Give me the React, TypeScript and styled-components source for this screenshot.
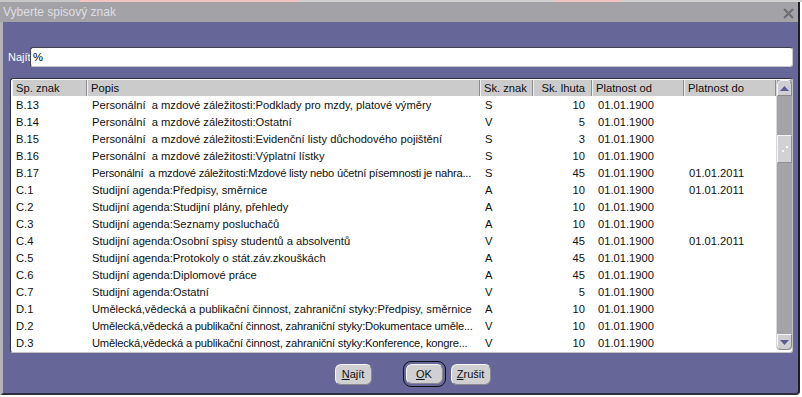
import React from 'react';
import styled, { createGlobalStyle } from 'styled-components';

const Global = createGlobalStyle`
  html, body { margin: 0; padding: 0; background: #ffffff; }
  body { font-family: "Liberation Sans", Arial, sans-serif; font-size: 11.2px; color: #000; }
  * { box-sizing: border-box; }
`;

const Screen = styled.div`
  width: 802px;
  height: 397px;
  overflow: hidden;
  background: #ffffff;
  display: flex;
  flex-direction: column;
`;

const TopStrip = styled.div`
  height: 2px;
  flex: none;
  background: linear-gradient(
    to right,
    #c8c8c8 0 80px,
    #f2c4c4 80px 300px,
    #d0d0d0 300px 555px,
    #f2c4c4 555px 622px,
    #d0d0d0 622px 100%
  );
`;

const Dialog = styled.div`
  width: 800px;
  height: 393px;
  flex: none;
  display: flex;
  flex-direction: column;
  background: #666699;
  border-left: 3px solid #b4b4b8;
  border-right: 2px solid #1e1e28;
  border-bottom: 2px solid #2e2e3a;
  border-bottom-right-radius: 4px;
`;

const TitleBar = styled.div`
  height: 20px;
  flex: none;
  margin-left: -3px;
  padding-left: 3px;
  padding-right: 4px;
  display: flex;
  align-items: center;
  justify-content: space-between;
  background: #a3a3a7;
  color: #dedee2;
  font-size: 12px;
`;

const Close = styled.svg`
  width: 11px;
  height: 11px;
  margin-top: 3px;
`;

const Body = styled.div`
  flex: 1;
  display: flex;
  flex-direction: column;
  padding: 25px 5px 0 5px;
`;

const SearchRow = styled.div`
  display: flex;
  align-items: center;
  height: 20px;
`;

const Label = styled.span`
  width: 22px;
  color: #ffffff;
  font-size: 11px;
`;

const Input = styled.div`
  flex: 1;
  height: 20px;
  background: #ffffff;
  border: 1px solid;
  border-color: #40404c #c8c8d0 #c8c8d0 #40404c;
  border-radius: 3px;
  padding: 0 2px;
  display: flex;
  align-items: center;
  font-size: 11.2px;
`;

const Frame = styled.div`
  margin: 11px 0 0 2px;
  height: 275px;
  display: flex;
  background: #ffffff;
  border: 1px solid;
  border-color: #30303c #c4c4c8 #c4c4c8 #30303c;
  border-radius: 3px;
  padding: 1px 0 0 1px;
  overflow: hidden;
`;

const Grid = styled.div`
  width: 764px;
  flex: none;
  display: grid;
  grid-template-columns: 75px 393px 53px 59px 92px 92px;
  grid-auto-rows: 17px;
  grid-template-rows: 16px;
  align-content: start;
  overflow: hidden;
`;

const Head = styled.div<{ $right?: boolean }>`
  background: #cbcbcb;
  border-right: 1px solid #8c8c90;
  border-left: 1px solid #f0f0f0;
  display: flex;
  align-items: center;
  justify-content: ${p => (p.$right ? 'flex-end' : 'flex-start')};
  padding: 0 ${p => (p.$right ? '6px' : '3px')};
  white-space: nowrap;
  color: #101010;
`;

const Cell = styled.div<{ $right?: boolean; $pad?: number; $tight?: boolean }>`
  display: flex;
  align-items: center;
  justify-content: ${p => (p.$right ? 'flex-end' : 'flex-start')};
  padding: 0 ${p => (p.$right ? '7px' : '0')} 0 ${p => (p.$right ? '0' : `${p.$pad ?? 4}px`)};
  white-space: pre;
  overflow: hidden;
  letter-spacing: ${p => (p.$tight ? '-0.22px' : 'normal')};
  color: #101010;
`;

const ScrollBar = styled.div`
  width: 16px;
  flex: none;
  display: flex;
  flex-direction: column;
  background: #a4a4a8;
  border-left: 1px solid #d8d8dc;
  margin-bottom: 2px;
  border-radius: 0 0 4px 4px;
  overflow: hidden;
`;

const ArrowBtn = styled.div<{ $down?: boolean }>`
  height: 16px;
  flex: none;
  background: #cfcfd2;
  border: 1px solid;
  border-color: #f4f4f4 #88888c #88888c #f4f4f4;
  border-radius: ${p => (p.$down ? '0 0 5px 5px' : '5px 5px 0 0')};
  display: flex;
  align-items: center;
  justify-content: center;
`;

const Track = styled.div`
  flex: 1;
  display: flex;
  flex-direction: column;
  padding-top: 39px;
`;

const Thumb = styled.div`
  height: 28px;
  background: #d2d2d4;
  border: 1px solid;
  border-color: #f4f4f4 #909094 #909094 #f4f4f4;
  display: flex;
  align-items: center;
  justify-content: center;
`;

const Footer = styled.div`
  display: flex;
  justify-content: center;
  align-items: center;
  margin-top: 8px;
  padding-left: 24px;
`;

const Button = styled.div<{ $def?: boolean; $gap?: number }>`
  height: ${p => (p.$def ? '26px' : '21px')};
  padding: ${p => (p.$def ? '2px' : '0')};
  margin-left: ${p => p.$gap ?? 0}px;
  border: ${p => (p.$def ? '1px solid #101018' : 'none')};
  border-radius: 8px;
  display: flex;
  align-items: stretch;
`;

const Face = styled.div<{ $w: number }>`
  width: ${p => p.$w}px;
  background: #d0d0d2;
  border: 1px solid;
  border-color: #f8f8f8 #8a8a90 #8a8a90 #f8f8f8;
  border-radius: 6px;
  display: flex;
  align-items: center;
  justify-content: center;
  font-size: 11px;
  color: #101010;
  u { text-decoration: underline; }
`;

type Row = [string, string, string, string, string, string];

const rows: Row[] = [
  ['B.13', 'Personální  a mzdové záležitosti:Podklady pro mzdy, platové výměry', 'S', '10', '01.01.1900', ''],
  ['B.14', 'Personální  a mzdové záležitosti:Ostatní', 'V', '5', '01.01.1900', ''],
  ['B.15', 'Personální  a mzdové záležitosti:Evidenční listy důchodového pojištění', 'S', '3', '01.01.1900', ''],
  ['B.16', 'Personální  a mzdové záležitosti:Výplatní lístky', 'S', '10', '01.01.1900', ''],
  ['B.17', 'Personální  a mzdové záležitosti:Mzdové listy nebo účetní písemnosti je nahra...', 'S', '45', '01.01.1900', '01.01.2011'],
  ['C.1', 'Studijní agenda:Předpisy, směrnice', 'A', '10', '01.01.1900', '01.01.2011'],
  ['C.2', 'Studijní agenda:Studijní plány, přehledy', 'A', '10', '01.01.1900', ''],
  ['C.3', 'Studijní agenda:Seznamy posluchačů', 'A', '10', '01.01.1900', ''],
  ['C.4', 'Studijní agenda:Osobní spisy studentů a absolventů', 'V', '45', '01.01.1900', '01.01.2011'],
  ['C.5', 'Studijní agenda:Protokoly o stát.záv.zkouškách', 'A', '45', '01.01.1900', ''],
  ['C.6', 'Studijní agenda:Diplomové práce', 'A', '45', '01.01.1900', ''],
  ['C.7', 'Studijní agenda:Ostatní', 'V', '5', '01.01.1900', ''],
  ['D.1', 'Umělecká,vědecká a publikační činnost, zahraniční styky:Předpisy, směrnice', 'A', '10', '01.01.1900', ''],
  ['D.2', 'Umělecká,vědecká a publikační činnost, zahraniční styky:Dokumentace uměle...', 'V', '10', '01.01.1900', ''],
  ['D.3', 'Umělecká,vědecká a publikační činnost, zahraniční styky:Konference, kongre...', 'V', '10', '01.01.1900', ''],
];

const Tri = ({ down }: { down?: boolean }) => (
  <svg width="9" height="5" viewBox="0 0 9 5">
    {down ? <polygon points="0,0 9,0 4.5,5" fill="#5c5c94" /> : <polygon points="0,5 9,5 4.5,0" fill="#5c5c94" />}
  </svg>
);

export default function App() {
  return (
    <>
      <Global />
      <Screen>
        <TopStrip />
        <Dialog>
          <TitleBar>
            <span>Vyberte spisový znak</span>
            <Close viewBox="0 0 11 11">
              <path d="M1 1 L10 10 M10 1 L1 10" stroke="#6e6e72" strokeWidth="2.2" />
            </Close>
          </TitleBar>
          <Body>
            <SearchRow>
              <Label>Najít</Label>
              <Input>%</Input>
            </SearchRow>
            <Frame>
              <Grid>
                <Head>Sp. znak</Head>
                <Head>Popis</Head>
                <Head>Sk. znak</Head>
                <Head $right>Sk. lhuta</Head>
                <Head>Platnost od</Head>
                <Head>Platnost do</Head>
                {rows.map(r => (
                  <React.Fragment key={r[0]}>
                    <Cell $pad={4}>{r[0]}</Cell>
                    <Cell $pad={5} $tight={r[1].endsWith('...')}>{r[1]}</Cell>
                    <Cell $pad={5}>{r[2]}</Cell>
                    <Cell $right>{r[3]}</Cell>
                    <Cell $pad={6}>{r[4]}</Cell>
                    <Cell $pad={5}>{r[5]}</Cell>
                  </React.Fragment>
                ))}
              </Grid>
              <ScrollBar>
                <ArrowBtn><Tri /></ArrowBtn>
                <Track>
                  <Thumb>
                    <svg width="8" height="8" viewBox="0 0 8 8">
                      <rect x="5" y="1" width="2" height="2" fill="#f8f8f8" />
                      <rect x="1" y="5" width="2" height="2" fill="#f8f8f8" />
                    </svg>
                  </Thumb>
                </Track>
                <ArrowBtn $down><Tri down /></ArrowBtn>
              </ScrollBar>
            </Frame>
            <Footer>
              <Button><Face $w={37}><span><u>N</u>ajít</span></Face></Button>
              <Button $def $gap={31}><Face $w={37}><span><u>O</u>K</span></Face></Button>
              <Button $gap={5}><Face $w={40}><span><u>Z</u>rušit</span></Face></Button>
            </Footer>
          </Body>
        </Dialog>
      </Screen>
    </>
  );
}
